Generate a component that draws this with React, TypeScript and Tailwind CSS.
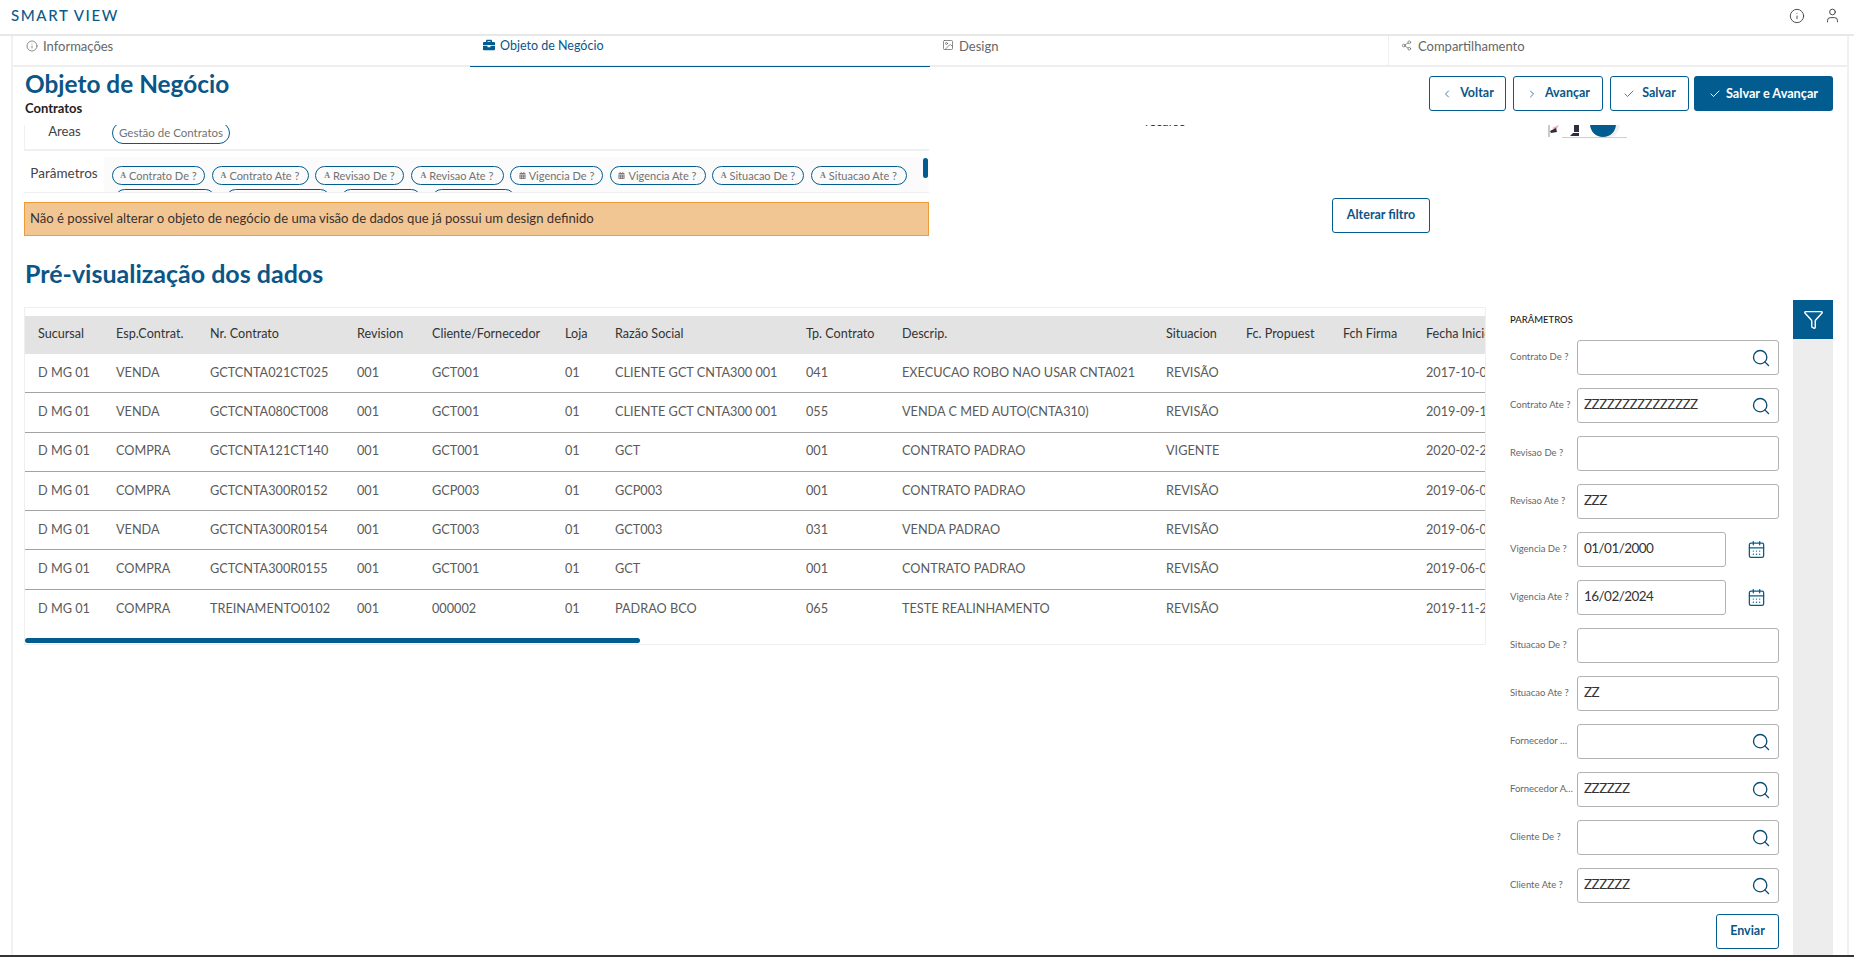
import React from "react";
import { Info, User, Image, Share2, ChevronLeft, ChevronRight, Check, Search, CalendarDays, Filter } from "lucide-react";
import { FaBriefcase, FaCalendarAlt } from "react-icons/fa";

const cols = ["Sucursal","Esp.Contrat.","Nr. Contrato","Revision","Cliente/Fornecedor","Loja","Razão Social","Tp. Contrato","Descrip.","Situacion","Fc. Propuest","Fch Firma","Fecha Inicio"];
const rows = [
  ["D MG 01","VENDA","GCTCNTA021CT025","001","GCT001","01","CLIENTE GCT CNTA300 001","041","EXECUCAO ROBO NAO USAR CNTA021","REVISÃO","","","2017-10-01"],
  ["D MG 01","VENDA","GCTCNTA080CT008","001","GCT001","01","CLIENTE GCT CNTA300 001","055","VENDA C MED AUTO(CNTA310)","REVISÃO","","","2019-09-10"],
  ["D MG 01","COMPRA","GCTCNTA121CT140","001","GCT001","01","GCT","001","CONTRATO PADRAO","VIGENTE","","","2020-02-20"],
  ["D MG 01","COMPRA","GCTCNTA300R0152","001","GCP003","01","GCP003","001","CONTRATO PADRAO","REVISÃO","","","2019-06-01"],
  ["D MG 01","VENDA","GCTCNTA300R0154","001","GCT003","01","GCT003","031","VENDA PADRAO","REVISÃO","","","2019-06-01"],
  ["D MG 01","COMPRA","GCTCNTA300R0155","001","GCT001","01","GCT","001","CONTRATO PADRAO","REVISÃO","","","2019-06-01"],
  ["D MG 01","COMPRA","TREINAMENTO0102","001","000002","01","PADRAO BCO","065","TESTE REALINHAMENTO","REVISÃO","","","2019-11-20"],
];
const gridCols = "grid grid-cols-[78px_94px_147px_75px_133px_50px_191px_96px_264px_80px_97px_83px_200px]";

const chips1: [string, boolean, string][] = [
  ["Contrato De ?", false, "w-[93px]"],
  ["Contrato Ate ?", false, "w-[97px]"],
  ["Revisao De ?", false, "w-[89px]"],
  ["Revisao Ate ?", false, "w-[93px]"],
  ["Vigencia De ?", true, "w-[93px]"],
  ["Vigencia Ate ?", true, "w-[96px]"],
  ["Situacao De ?", false, "w-[92px]"],
  ["Situacao Ate ?", false, "w-[96px]"],
];
const chips2: [string, boolean, string][] = [
  ["Fornecedor De ?", false, "w-[100px]"],
  ["Fornecedor Ate ?", false, "w-[104px]"],
  ["Cliente De ?", false, "w-[80px]"],
  ["Cliente Ate ?", false, "w-[83px]"],
];

const fields: { label: string; value: string; kind: "search" | "plain" | "date" }[] = [
  { label: "Contrato De ?", value: "", kind: "search" },
  { label: "Contrato Ate ?", value: "ZZZZZZZZZZZZZZZ", kind: "search" },
  { label: "Revisao De ?", value: "", kind: "plain" },
  { label: "Revisao Ate ?", value: "ZZZ", kind: "plain" },
  { label: "Vigencia De ?", value: "01/01/2000", kind: "date" },
  { label: "Vigencia Ate ?", value: "16/02/2024", kind: "date" },
  { label: "Situacao De ?", value: "", kind: "plain" },
  { label: "Situacao Ate ?", value: "ZZ", kind: "plain" },
  { label: "Fornecedor De ?", value: "", kind: "search" },
  { label: "Fornecedor Ate ?", value: "ZZZZZZ", kind: "search" },
  { label: "Cliente De ?", value: "", kind: "search" },
  { label: "Cliente Ate ?", value: "ZZZZZZ", kind: "search" },
];

function Chip({ label, cal, width }: { label: string; cal: boolean; width: string }) {
  return (
    <span className={`inline-flex h-[19px] shrink-0 items-center justify-center gap-[3px] whitespace-nowrap rounded-full border border-[#035c90] text-[11px] leading-none text-[#727272] ${width}`}>
      {cal ? <FaCalendarAlt className="h-[7px] w-[7px] text-[#777]" /> : <span className="font-['Liberation_Serif',serif] text-[8px] font-bold text-[#777]">A</span>}
      {label}
    </span>
  );
}

function OutlineBtn({ icon, children, className }: { icon?: React.ReactNode; children: React.ReactNode; className: string }) {
  return (
    <button className={`flex h-[35px] items-center justify-center gap-[7px] rounded-[3px] border border-[#035c90] bg-white text-[12.5px] font-bold text-[#0a5687] ${className}`}>
      {icon}
      {children}
    </button>
  );
}

export default function App() {
  return (
    <div className="flex h-[957px] w-[1854px] flex-col overflow-hidden border-b-2 border-[#333] bg-white font-['Lato','Noto_Sans',sans-serif]">
      <header className="flex h-[36px] shrink-0 items-center justify-between border-b-2 border-[#e8e8e8] pl-[11px] pr-[13px]">
        <span className="-mt-[3px] text-[15px] font-medium tracking-[1.6px] text-[#0b5a8a]">SMART VIEW</span>
        <div className="-mt-[3px] flex items-center gap-[19px] text-[#444]">
          <Info className="h-[16px] w-[16px]" strokeWidth={1.4} />
          <User className="h-[17px] w-[17px]" strokeWidth={1.4} />
        </div>
      </header>

      <main className="ml-[11px] mr-[5px] flex min-h-0 flex-1 flex-col border-x-2 border-[#f1f1f1]">
        <nav className="grid h-[31px] shrink-0 grid-cols-[457px_460px_459px_1fr] border-b-2 border-[#eeeeee] text-[13px] text-[#666]">
          <div className="flex items-start gap-[5px] pl-[13px] pt-[1px]">
            <Info className="mt-[3px] h-[12px] w-[12px]" strokeWidth={1.5} />
            Informações
          </div>
          <div className="-mb-[2px] flex items-start gap-[5px] border-b border-[#035c90] pl-[13px] pt-[1px] text-[12.5px] text-[#0a5687]">
            <FaBriefcase className="mt-[2px] h-[12px] w-[12px] text-[#035c90]" />
            Objeto de Negócio
          </div>
          <div className="flex items-start gap-[5px] border-r border-[#efefef] pl-[12px] pt-[1px]">
            <Image className="mt-[2px] h-[12px] w-[12px]" strokeWidth={1.5} />
            Design
          </div>
          <div className="flex items-start gap-[6px] pl-[12px] pt-[1px]">
            <Share2 className="mt-[3px] h-[11px] w-[11px]" strokeWidth={1.5} />
            Compartilhamento
          </div>
        </nav>

        <section className="flex h-[58px] shrink-0 justify-between pl-[12px] pr-[14px]">
          <div>
            <h1 className="mt-[2px] text-[24.4px] font-bold leading-[30px] text-[#0a5687]">Objeto de Negócio</h1>
            <p className="mt-[1px] text-[13px] font-bold leading-[16px] text-[#222]">Contratos</p>
          </div>
          <div className="mt-[9px] flex gap-[7px]">
            <OutlineBtn className="w-[77px]" icon={<ChevronLeft className="h-[12px] w-[12px]" strokeWidth={1.5} />}>Voltar</OutlineBtn>
            <OutlineBtn className="w-[90px]" icon={<ChevronRight className="h-[12px] w-[12px]" strokeWidth={1.5} />}>Avançar</OutlineBtn>
            <OutlineBtn className="w-[79px]" icon={<Check className="h-[12px] w-[12px]" strokeWidth={1.5} />}>Salvar</OutlineBtn>
            <button className="-ml-[2px] flex h-[35px] w-[139px] items-center justify-center gap-[5px] rounded-[3px] bg-[#035c90] text-[12.7px] font-bold text-white">
              <Check className="h-[12px] w-[12px]" strokeWidth={2} />
              Salvar e Avançar
            </button>
          </div>
        </section>

        <section className="flex h-[111px] shrink-0">
          <div className="ml-[11px] w-[905px] shrink-0">
            <div className="flex h-[26px] overflow-hidden border-b-2 border-[#efefef]">
              <div className="-mt-[1px] w-[80px] shrink-0 border-l border-[#f1f1f1] text-center text-[13.2px] leading-[14px] text-[#444]">Areas</div>
              <div className="-mt-[6px] flex-1 pl-[8px]">
                <span className="inline-flex h-[22px] items-center rounded-full border border-[#035c90] px-[6px] text-[11.5px] text-[#727272]">Gestão de Contratos</span>
              </div>
            </div>
            <div className="relative mt-[6px] flex h-[36px] overflow-hidden border-b border-[#efefef] bg-[#fbfbfb]">
              <div className="w-[80px] shrink-0 bg-white pt-[8px] text-center text-[13.5px] leading-[16px] text-[#444]">Parâmetros</div>
              <div className="flex flex-col pl-[8px] pt-[9px]">
                <div className="flex gap-[6.5px]">{chips1.map(([l, c, w]) => <Chip key={l} label={l} cal={c} width={w} />)}</div>
                <div className="mt-[4px] flex gap-[11px] pl-[3px]">{chips2.map(([l, c, w]) => <Chip key={l} label={l} cal={c} width={w} />)}</div>
              </div>
              <div className="absolute right-[1px] top-[1px] h-[20px] w-[5px] rounded-full bg-[#035c90]" />
            </div>
            <div className="mt-[9px] flex h-[34px] items-center border border-[#ee9c3a] bg-[#f2c692] pl-[5px] text-[13.1px] text-[#3a3030]">
              Não é possivel alterar o objeto de negócio de uma visão de dados que já possui um design definido
            </div>
          </div>
          <div className="flex min-w-0 flex-1 flex-col">
            <div className="flex h-[13px] overflow-hidden">
              <div className="ml-[216px] -mt-[11px] h-[24px] text-[12.5px] leading-[16px] text-[#333]">recurso</div>
              <svg className="ml-[362px]" width="80" height="13" viewBox="0 0 80 13">
                <rect x="0" y="0" width="2" height="12" fill="#c9c9c9" />
                <path d="M4 3 L11 0 L8 5 Z" fill="#f2a7ad" />
                <path d="M2 6 L8 3 L9 7 L3 8 Z" fill="#2f2e41" />
                <rect x="26" y="0" width="5" height="7" fill="#2f2e41" />
                <path d="M25 8 H31 V11 H22 Z" fill="#2f2e41" />
                <circle cx="58" cy="-1" r="14" fill="#f0f0f0" />
                <circle cx="55" cy="-1" r="13" fill="#035c90" />
                <rect x="14" y="12" width="65" height="1" fill="#cfcfcf" />
              </svg>
            </div>
            <div className="mt-[60px] pl-[403px]">
              <OutlineBtn className="w-[98px]">Alterar filtro</OutlineBtn>
            </div>
          </div>
        </section>

        <h2 className="mt-[24px] h-[40px] shrink-0 pl-[12px] text-[25px] font-bold leading-[27px] text-[#0a5687]">Pré-visualização dos dados</h2>

        <section className="flex min-h-0 flex-1">
          <div className="ml-[11px] mt-[7px] h-[338px] w-[1462px] shrink-0 overflow-hidden border border-[#efefef] pt-[8px]">
            <div className={`${gridCols} h-[38px] items-center bg-[#e3e3e3] pb-[1px] text-[12.6px] text-[#333]`}>
              {cols.map((c) => <div key={c} className="whitespace-nowrap pl-[13px]">{c}</div>)}
            </div>
            {rows.map((r, i) => (
              <div key={i} className={`${gridCols} h-[39.3px] items-center pb-[2px] text-[12.7px] text-[#5a5a5a] ${i < 6 ? "border-b border-[#a3a3a3]" : ""}`}>
                {r.map((c, j) => <div key={j} className="whitespace-nowrap pl-[13px]">{c}</div>)}
              </div>
            ))}
            <div className="mt-[9px] h-[5px] w-[615px] rounded-full bg-[#035c90]" />
          </div>

          <div className="ml-[24px] w-[283px] shrink-0">
            <h3 className="mt-[13px] h-[27px] text-[9.5px] font-medium leading-[13px] text-[#222]">PARÂMETROS</h3>
            <div className="flex flex-col gap-[13px]">
              {fields.map((f) => (
                <div key={f.label} className="flex h-[35px] items-center">
                  <label className="mr-[4px] w-[63px] truncate text-[9.5px] text-[#666]">{f.label}</label>
                  <div className={`flex h-[35px] items-center justify-between rounded-[3px] border border-[#b2b2b2] pl-[6px] pr-[7px] text-[13.5px] tracking-[-0.55px] text-[#333] ${f.kind === "date" ? "w-[149px]" : "w-[202px]"}`}>
                    <span className="pb-[2px]">{f.value}</span>
                    {f.kind === "search" && <Search className="h-[20px] w-[20px] text-[#0a4a73]" strokeWidth={1.6} />}
                  </div>
                  {f.kind === "date" && <CalendarDays className="ml-[21px] h-[19px] w-[19px] text-[#035c90]" strokeWidth={1.6} />}
                </div>
              ))}
            </div>
            <div className="mt-[11px] flex w-[269px] justify-end">
              <OutlineBtn className="w-[63px]">Enviar</OutlineBtn>
            </div>
          </div>

          <div className="w-[40px] shrink-0 bg-[#ededed]">
            <div className="flex h-[39px] items-center justify-center bg-[#035c90]">
              <Filter className="h-[21px] w-[21px] text-white" strokeWidth={1.6} />
            </div>
          </div>
        </section>
      </main>
    </div>
  );
}
